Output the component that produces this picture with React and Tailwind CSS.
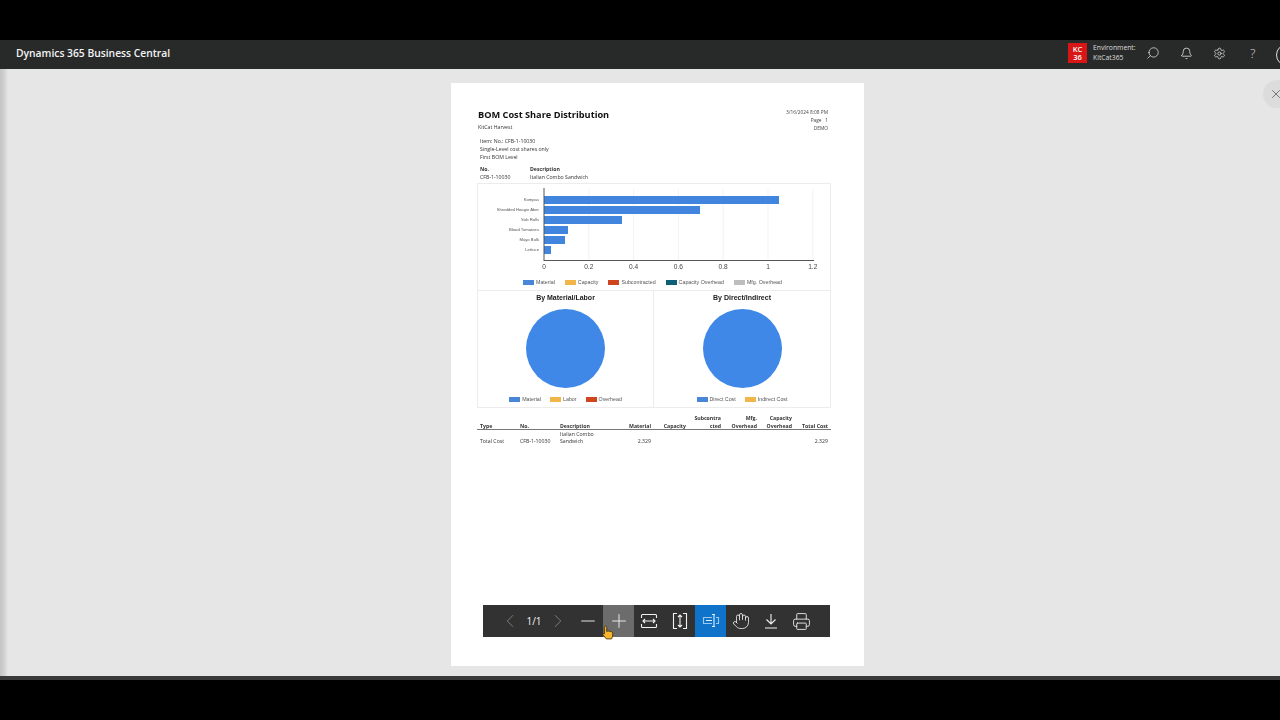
import React from "react";
import { Search, Bell, Settings, X, ChevronLeft, ChevronRight, Minus, Plus, Hand, Printer } from "lucide-react";

const sans = "font-['Open_Sans','Noto_Sans',sans-serif]";
const arial = "font-['Liberation_Sans',Arial,sans-serif]";

const bars = [
  ["Kompas", 235],
  ["Shredded Hoagie Aber", 156],
  ["Sub Rolls", 78],
  ["Blood Tomatoes", 24],
  ["Mayo Bulk", 21],
  ["Lettuce", 7],
];
const ticks = ["0", "0.2", "0.4", "0.6", "0.8", "1", "1.2"];

function Legend({ items, className = "" }) {
  return (
    <div className={`flex items-center justify-center gap-[9px] h-[10px] ${arial} ${className}`}>
      {items.map(([label, color]) => (
        <div key={label} className="flex items-center gap-[2px]">
          <span className="block w-[11px] h-[5px]" style={{ backgroundColor: color }} />
          <span className="text-[5.300px] leading-[8px] text-[#555555] whitespace-nowrap">{label}</span>
        </div>
      ))}
    </div>
  );
}

function BarChart() {
  return (
    <svg width="352" height="88" viewBox="0 0 352 88" className="block">
      {[1, 2, 3, 4, 5, 6].map((i) => (
        <line key={i} x1={66 + i * 44.8} x2={66 + i * 44.8} y1="5" y2="76" stroke="#eeeeee" strokeWidth="0.7" />
      ))}
      {bars.map(([label, w], i) => (
        <g key={label}>
          <rect x="66" y={12 + i * 10} width={w} height="8" fill="#4285df" />
          <text x="61" y={17 + i * 10} textAnchor="end" fontSize="4.2" fill="#555555" fontFamily="Liberation Sans">{label}</text>
        </g>
      ))}
      <line x1="66" x2="66" y1="4" y2="77" stroke="#555555" strokeWidth="1" />
      <line x1="66" x2="336" y1="76.5" y2="76.5" stroke="#555555" strokeWidth="1" />
      {ticks.map((t, i) => (
        <text key={t} x={66 + i * 44.8} y="85" textAnchor="middle" fontSize="6.6" fill="#444444" fontFamily="Liberation Sans">{t}</text>
      ))}
    </svg>
  );
}

function PieCard({ title, legend, border }) {
  return (
    <div className={`flex flex-col items-center pt-[3px] ${border ? "border-r border-[#ececec]" : ""}`}>
      <div className={`text-[7px] leading-[8px] font-bold text-[#222222] ${arial}`}>{title}</div>
      <div className="w-[79px] h-[79px] rounded-full bg-[#3f88e8] mt-[7px]" />
      <Legend items={legend} className="mt-[6px]" />
    </div>
  );
}

const IconFitWidth = () => (
  <svg width="18" height="18" viewBox="0 0 18 18" fill="none" stroke="#f2f2f2" strokeWidth="1.1">
    <path d="M1.500 6V3.500q0-1 1-1h13q1 0 1 1V6M1.500 12v2.500q0 1 1 1h13q1 0 1-1V12" />
    <path d="M3 9h12M5 7 3 9l2 2M13 7l2 2-2 2" />
  </svg>
);
const IconFitHeight = () => (
  <svg width="18" height="18" viewBox="0 0 18 18" fill="none" stroke="#f2f2f2" strokeWidth="1.1">
    <path d="M6 1.500H2.500v15H6M12 1.500h3.500v15H12" />
    <path d="M9 3v12M7 5l2-2 2 2M7 13l2 2 2-2" />
  </svg>
);
const IconTextSelect = () => (
  <svg width="18" height="18" viewBox="0 0 18 18" fill="none" stroke="#9cc9f2" strokeWidth="1.1">
    <path d="M10 5.500H1.500v6H10M14 5.500h2.500v6H14" />
    <path d="M4 8.500h6M10 2.500h3M10 14.500h3M12 2.500v12" stroke="#e4f1fc" />
  </svg>
);
const IconDownload = () => (
  <svg width="18" height="18" viewBox="0 0 18 18" fill="none" stroke="#f2f2f2" strokeWidth="1.1">
    <path d="M9 2v10M4.500 7.500 9 12l4.500-4.500M3 16h12" />
  </svg>
);

const HandCursor = () => (
  <svg width="12" height="15" viewBox="0 0 12 15" className="absolute left-[119px] top-[20px]">
    <path d="M3.500 1.200c.8 0 1.200.5 1.200 1.200v4l.6-.2c1.200-.3 4.500.3 5.200 1.200.4.800.3 3.700-.5 5.500l-.5 1H4.300L1 9.800c-.5-.8.2-1.600 1.100-1.100l.3.200V2.400c0-.7.400-1.200 1.100-1.200Z" fill="#f5b52e" stroke="#3b2a08" strokeWidth="0.8" />
  </svg>
);

export default function App() {
  return (
    <div className="w-[1280px] h-[720px] bg-black overflow-hidden flex flex-col">
      <div className="h-10 shrink-0 bg-black" />
      <header className={`h-[29px] shrink-0 bg-[#282a2a] flex items-center pl-4 text-white ${sans} relative`}>
        <div className="text-[10.300px] font-semibold text-[#f4f4f4] mt-[-1px]">Dynamics 365 Business Central</div>
        <div className="ml-auto flex items-center h-full mt-[-3px]">
          <div className="w-[19px] h-5 bg-[#d81616] flex flex-col items-center justify-center text-[7.500px] leading-[8px] font-semibold text-white">
            <span>KC</span>
            <span>36</span>
          </div>
          <div className="ml-[6px] w-[44px] text-[6.800px] leading-[10px] text-[#dddddd]">
            <div>Environment:</div>
            <div>KitCat365</div>
          </div>
          <Search className="ml-[9px] w-[14px] h-[14px] -scale-x-100 text-[#e0e0e0]" strokeWidth={1.3} />
          <Bell className="ml-[20px] w-[13px] h-[13px] text-[#e0e0e0]" strokeWidth={1.5} />
          <Settings className="ml-[20px] w-[13px] h-[13px] text-[#e0e0e0]" strokeWidth={1.4} />
          <span className="ml-[24px] w-[9px] text-[13px] leading-none text-[#d8d8d8] font-light">?</span>
          <div className="ml-[17px] mr-[-18px] mt-[3px] w-[22px] h-[22px] rounded-full border border-[#dddddd]" />
        </div>
      </header>

      <main className="relative h-[607px] shrink-0 bg-[#e6e6e6] pl-[451px] pt-[14px]">
        <div className="absolute left-0 top-0 bottom-0 w-[8px] bg-gradient-to-r from-[#c4c4c4] via-[#d0d0d0] to-[#e6e6e6]" />
        <div className="absolute right-[-13px] top-[11px] w-[30px] h-[28px] rounded-full bg-[#dcdcdc] flex items-center pl-[6px]">
          <X className="w-3.5 h-3.5 text-[#555555]" strokeWidth={1.3} />
        </div>

        <section className={`w-[413px] h-[583px] bg-white pt-[26px] pl-[26px] pr-[33px] ${sans} text-[#333333] blur-[0.25px]`}>
          <div className="flex justify-between items-start">
            <div>
              <h1 className="pl-[1px] text-[9.200px] leading-[12px] font-bold text-[#111111] whitespace-nowrap">BOM Cost Share Distribution</h1>
              <div className="mt-[2px] pl-[1px] text-[5.200px] leading-[8px]">KitCat Harvest</div>
            </div>
            <div className="text-[4.800px] leading-[8px] text-right text-[#444444] pr-[3px] -mt-[1px]">
              <div>3/16/2024 8:08 PM</div>
              <div>Page &nbsp; 1</div>
              <div>DEMO</div>
            </div>
          </div>

          <div className="mt-[5px] pl-[3px] text-[5.200px] leading-[8px]">
            <div>Item: No.: CFB-1-10030</div>
            <div>Single-Level cost shares only</div>
            <div>First BOM Level</div>
          </div>

          <div className="mt-[4px] pl-[3px] grid grid-cols-[50px_1fr] text-[5.200px] leading-[8px]">
            <div className="font-bold">No.</div>
            <div className="font-bold">Description</div>
            <div>CFB-1-10030</div>
            <div>Italian Combo Sandwich</div>
          </div>

          <div className="mt-[2px] border border-[#ececec]">
            <div className="h-[107px] border-b border-[#ececec]">
              <BarChart />
              <Legend
                className="mt-[5px] pr-[3px] gap-[10px]"
                items={[
                  ["Material", "#4a86d8"],
                  ["Capacity", "#f1b64a"],
                  ["Subcontracted", "#cf4520"],
                  ["Capacity Overhead", "#0d5f78"],
                  ["Mfg. Overhead", "#bdbdbd"],
                ]}
              />
            </div>
            <div className="grid grid-cols-2 h-[116px]">
              <PieCard
                title="By Material/Labor"
                border
                legend={[["Material", "#4a86d8"], ["Labor", "#f1b64a"], ["Overhead", "#cf4520"]]}
              />
              <PieCard
                title="By Direct/Indirect"
                legend={[["Direct Cost", "#4a86d8"], ["Indirect Cost", "#f1b64a"]]}
              />
            </div>
          </div>

          <div className="mt-[6px] text-[5.200px] leading-[8px]">
            <div className="grid grid-cols-[43px_40px_56px_35px_35px_35px_36px_35px_36px] items-end font-bold border-b border-[#777777] h-[16px]">
              <div className="pl-[3px]">Type</div>
              <div>No.</div>
              <div>Description</div>
              <div className="text-right">Material</div>
              <div className="text-right">Capacity</div>
              <div className="text-right pl-[6px]">Subcontra<br />cted</div>
              <div className="text-right pl-[8px]">Mfg. Overhead</div>
              <div className="text-right pl-[6px]">Capacity Overhead</div>
              <div className="text-right whitespace-nowrap">Total Cost</div>
            </div>
            <div className="grid grid-cols-[43px_40px_56px_35px_35px_35px_36px_35px_36px] items-end leading-[7px] pt-[1px]">
              <div className="pl-[3px]">Total Cost</div>
              <div>CFB-1-10030</div>
              <div className="pr-[10px]">Italian Combo Sandwich</div>
              <div className="text-right">2.329</div>
              <div />
              <div />
              <div />
              <div />
              <div className="text-right">2.329</div>
            </div>
          </div>
        </section>

        <div className={`absolute left-[483px] top-[536px] w-[347px] h-[32px] bg-[#323232] flex items-center text-[#f2f2f2] ${sans}`}>
          <div className="w-[39px] flex justify-end pr-[1px]"><ChevronLeft className="w-[22px] h-[22px] text-[#8c8c8c]" strokeWidth={0.9} /></div>
          <div className="w-[24px] text-center text-[10px]">1/1</div>
          <div className="w-[26px] flex pl-[1px]"><ChevronRight className="w-[22px] h-[22px] text-[#8c8c8c]" strokeWidth={0.9} /></div>
          <div className="w-[31px] h-full flex items-center justify-center"><Minus className="w-[22px] h-[22px]" strokeWidth={1} /></div>
          <div className="w-[31px] h-full bg-[#6c6c6c] flex items-center justify-center"><Plus className="w-[22px] h-[22px]" strokeWidth={1} /></div>
          <div className="w-[30px] flex justify-center"><IconFitWidth /></div>
          <div className="w-[31px] flex justify-center"><IconFitHeight /></div>
          <div className="w-[31px] h-full bg-[#0f74c9] flex items-center justify-center"><IconTextSelect /></div>
          <div className="w-[30px] flex justify-center"><Hand className="w-[18px] h-[18px]" strokeWidth={1.1} /></div>
          <div className="w-[30px] flex justify-center"><IconDownload /></div>
          <div className="w-[31px] flex justify-center"><Printer className="w-[19px] h-[19px]" strokeWidth={1.1} /></div>
          <HandCursor />
        </div>
      </main>

      <div className="h-1 shrink-0 bg-[#3a3a3a]" />
      <div className="h-10 shrink-0 bg-black" />
    </div>
  );
}
